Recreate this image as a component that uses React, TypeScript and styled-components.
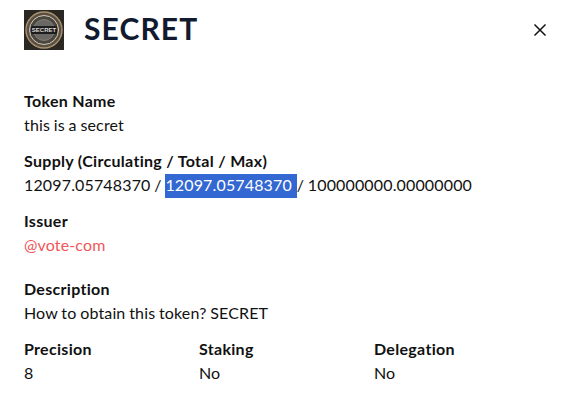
import styled, { createGlobalStyle } from "styled-components"

const GlobalStyle = createGlobalStyle`
    html, body {
        margin: 0;
        background: #fff;
    }
    body {
        font-family: "Lato", "Noto Sans", sans-serif;
        color: #0f0f10;
    }
`
const Modal = styled.div`
    width: 572px;
    height: 407px;
    box-sizing: border-box;
    overflow: hidden;
    padding: 10px 20px 0 24px;
`
const Header = styled.header`
    display: flex;
    align-items: center;
    height: 40px;
    margin-bottom: 40px;
`
const Logo = styled.svg`
    width: 40px;
    height: 40px;
    flex: none;
    margin-right: 20px;
`
const Title = styled.h1`
    flex: 1;
    margin: 0;
    padding-bottom: 4px;
    font-size: 30px;
    line-height: 36px;
    font-weight: 700;
    color: #111a2e;
    letter-spacing: 1.1px;
`
const Close = styled.button`
    display: flex;
    padding: 0;
    border: 0;
    background: none;
    color: #111;
`
const Field = styled.section<{ $gap?: number }>`
    margin-bottom: ${p => p.$gap ?? 12}px;
`
const Label = styled.div`
    font-size: 16px;
    line-height: 22px;
    padding-bottom: 2px;
    font-weight: 700;
    letter-spacing: 0.3px;
    color: #111;
`
const Value = styled.div<{ $accent?: boolean }>`
    font-size: 16px;
    line-height: 22px;
    padding-bottom: 2px;
    letter-spacing: 0.15px;
    word-spacing: -0.5px;
    white-space: pre;
    color: ${p => (p.$accent ? "#f0565a" : "#111")};
`
const Selected = styled.span`
    display: inline-block;
    height: 24px;
    margin-bottom: -2px;
    padding-right: 1px;
    background: #3367d1;
    color: #fff;
`
const Columns = styled.div`
    display: grid;
    grid-template-columns: repeat(3, 175px);
`

const CoinLogo = () => (
    <Logo viewBox="0 0 40 40">
        <rect width="40" height="40" fill="#2b2723" />
        <circle cx="20" cy="20" r="18" fill="#5a4f42" stroke="#a8926f" strokeWidth="1.4" />
        <circle cx="20" cy="20" r="14.5" fill="#4a4640" stroke="#d6ccbb" strokeWidth="1" />
        <circle cx="20" cy="20" r="10.5" fill="#6a6865" stroke="#8d8578" strokeWidth="0.8" />
        <rect x="7" y="16" width="26" height="8" rx="1" fill="#1d1d1e" />
        <text x="20" y="22.4" textAnchor="middle" fontSize="6" fontWeight="700" fill="#dcd9d4" fontFamily="Liberation Sans, sans-serif">
            SECRET
        </text>
    </Logo>
)

const App = () => {
    return (
        <Modal>
            <GlobalStyle />
            <Header>
                <CoinLogo />
                <Title>SECRET</Title>
                <Close aria-label="Close">
                    <svg width="24" height="24" viewBox="0 0 24 24" fill="none" stroke="currentColor" strokeWidth="1.5">
                        <path d="M6.5 6.5l11 11M17.5 6.5l-11 11" />
                    </svg>
                </Close>
            </Header>
            <Field>
                <Label>Token Name</Label>
                <Value>this is a secret</Value>
            </Field>
            <Field>
                <Label>Supply (Circulating / Total / Max)</Label>
                <Value>
                    12097.05748370 / <Selected>12097.05748370 </Selected>/ 100000000.00000000
                </Value>
            </Field>
            <Field $gap={20}>
                <Label>Issuer</Label>
                <Value $accent>@vote-com</Value>
            </Field>
            <Field>
                <Label>Description</Label>
                <Value>How to obtain this token? SECRET</Value>
            </Field>
            <Columns>
                <div>
                    <Label>Precision</Label>
                    <Value>8</Value>
                </div>
                <div>
                    <Label>Staking</Label>
                    <Value>No</Value>
                </div>
                <div>
                    <Label>Delegation</Label>
                    <Value>No</Value>
                </div>
            </Columns>
        </Modal>
    )
}

export default App
